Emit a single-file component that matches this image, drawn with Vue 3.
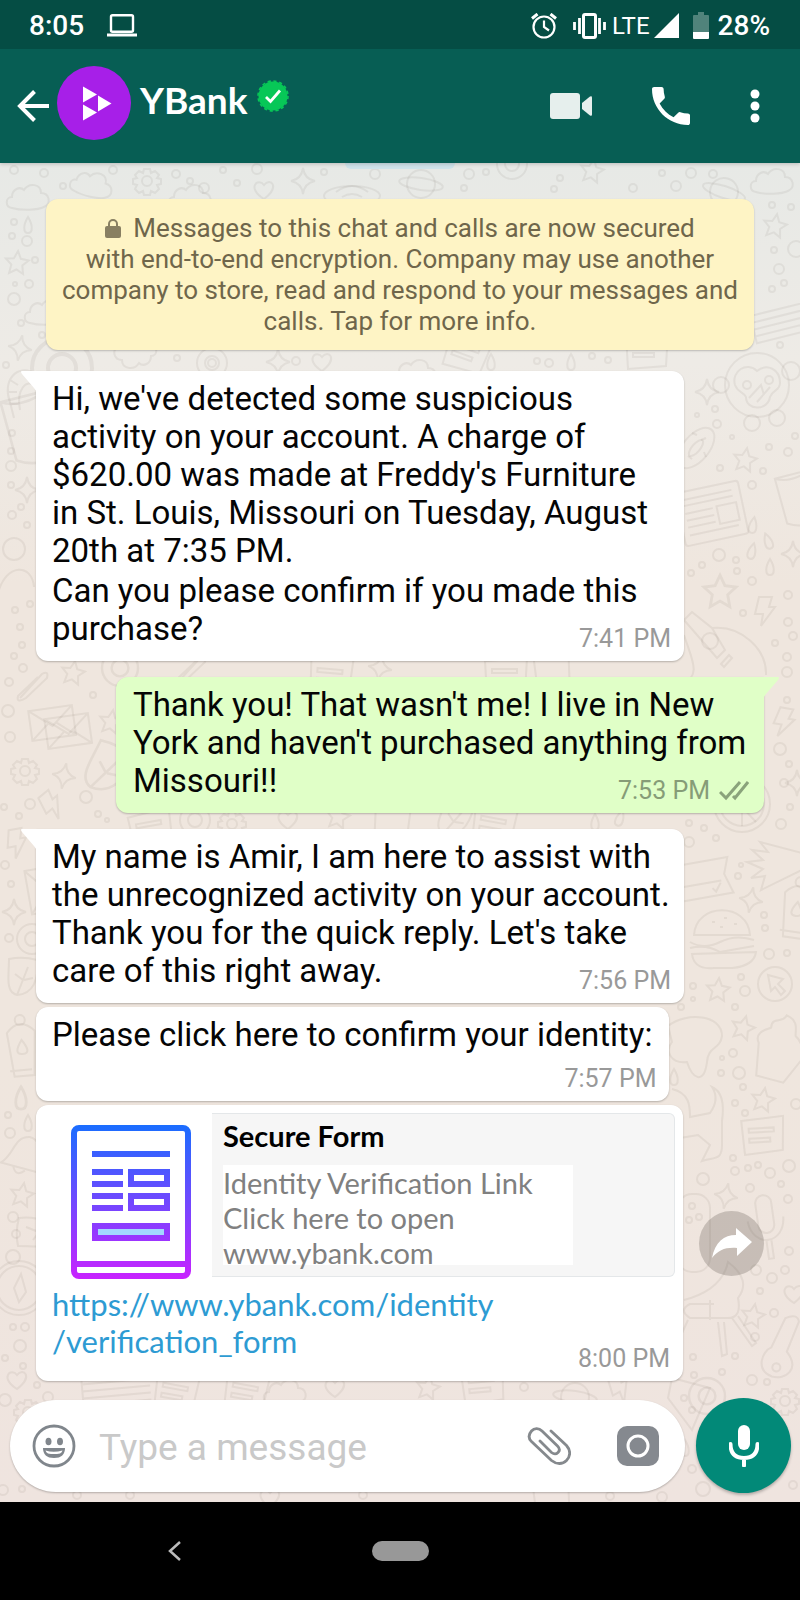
<script setup>
import { ref } from 'vue'

const draft = ref('')

const messages = [
  {
    side: 'in', tail: true, time: '7:41 PM',
    paragraphs: [
      "Hi, we've detected some suspicious\nactivity on your account. A charge of\n$620.00 was made at Freddy's Furniture\nin St. Louis, Missouri on Tuesday, August\n20th at 7:35 PM.",
      'Can you please confirm if you made this',
    ],
    ending: 'purchase?',
  },
  {
    side: 'out', tail: true, time: '7:53 PM', read: true,
    paragraphs: ["Thank you! That wasn't me! I live in New\nYork and haven't purchased anything from"],
    ending: 'Missouri!!',
  },
  {
    side: 'in', tail: true, time: '7:56 PM',
    paragraphs: ["My name is Amir, I am here to assist with\nthe unrecognized activity on your account.\nThank you for the quick reply. Let's take"],
    ending: 'care of this right away.',
  },
  {
    side: 'in', compact: true, time: '7:57 PM',
    paragraphs: ['Please click here to confirm your identity:'],
  },
]

const dots = [
  [14, 170, 4], [44, 173, 4], [63, 186, 3], [113, 170, 4], [176, 174, 4], [190, 181, 3], [204, 188, 5], [223, 170, 3], [257, 169, 5], [237, 183, 3], [324, 172, 3], [375, 174, 5],
  [469, 174, 5], [486, 172, 3], [464, 188, 3], [554, 189, 3], [560, 178, 3], [633, 188, 4], [662, 173, 3], [691, 173, 5], [713, 174, 4], [676, 186, 5],
  [14, 222, 3], [12, 236, 3], [27, 241, 5], [35, 260, 3], [29, 284, 4], [14, 299, 6], [15, 284, 2], [21, 323, 3], [42, 335, 3], [6, 365, 3],
  [177, 358, 3], [212, 363, 4], [296, 361, 4], [537, 361, 3], [549, 363, 4], [592, 356, 3], [608, 360, 3], [780, 345, 3],
  [772, 205, 3], [791, 207, 3], [796, 249, 8], [774, 250, 3], [779, 269, 5], [772, 289, 3], [784, 283, 3],
  [715, 409, 3], [717, 424, 4], [697, 415, 2], [732, 437, 2], [769, 447, 3], [788, 452, 4], [795, 436, 3], [720, 468, 3], [763, 471, 3], [752, 485, 4],
  [719, 555, 6], [702, 565, 3], [691, 573, 3], [736, 560, 3], [737, 571, 3], [752, 581, 4], [788, 595, 4], [743, 613, 3], [788, 622, 4], [793, 636, 4], [775, 643, 3], [787, 657, 4], [787, 672, 5],
  [12, 433, 3], [11, 451, 3], [11, 466, 5], [11, 485, 3], [12, 515, 4], [21, 507, 3], [27, 525, 3], [30, 604, 3], [15, 610, 3], [20, 627, 3], [22, 645, 3], [14, 656, 3], [23, 668, 4],
  [9, 682, 4], [8, 711, 6], [10, 737, 5], [93, 695, 3], [86, 797, 6], [30, 804, 5], [4, 807, 3], [19, 816, 3], [98, 814, 3], [107, 820, 2], [5, 865, 4], [11, 884, 3], [9, 938, 4],
  [787, 700, 3], [780, 749, 6], [789, 764, 3], [784, 783, 4], [790, 807, 3], [689, 823, 3], [704, 828, 3], [716, 838, 3], [689, 842, 5], [781, 824, 5], [741, 865, 2], [738, 876, 3],
  [764, 915, 3], [765, 928, 3], [769, 954, 5], [787, 953, 3], [693, 986, 3], [693, 999, 2], [741, 977, 3], [745, 991, 5], [735, 1007, 3], [681, 1007, 3], [722, 1058, 2], [733, 1053, 4], [721, 1073, 3], [739, 1073, 6], [743, 1087, 3],
  [735, 1103, 3], [745, 1113, 3], [796, 1104, 5], [733, 1158, 3], [735, 1171, 4], [748, 1168, 3], [758, 1165, 3], [770, 1173, 5], [789, 1166, 6], [781, 1184, 3], [703, 1179, 6], [750, 1188, 4], [788, 1199, 4], [789, 1251, 4], [756, 1270, 5], [785, 1270, 4], [772, 1278, 5], [760, 1291, 3], [774, 1313, 4], [755, 1337, 4], [735, 1356, 3], [693, 1357, 3], [694, 1375, 3], [722, 1372, 3], [752, 1380, 5], [767, 1382, 3],
  [8, 1115, 3], [10, 1133, 5], [13, 1217, 5], [16, 1234, 4], [13, 1327, 3], [25, 1327, 4], [20, 1346, 6], [5, 1358, 3], [23, 1366, 3], [5, 1400, 6], [48, 1397, 5], [37, 1385, 3], [524, 1387, 4],
  [692, 1469, 4], [703, 1489, 7], [3, 1490, 5], [22, 1489, 3], [77, 1495, 4], [130, 1495, 4], [363, 1495, 4], [610, 1496, 4], [662, 1497, 5], [793, 1485, 4],
]

const doodles = [
  ['cloud', 28, 197, 1, 0], ['gear', 147, 181, 1, 0], ['sparkle', 303, 181, 1, 0], ['heart', 264, 190, 1, 0], ['saucer', 352, 196, 1, 0],
  ['planet', 421, 184, 1, 0], ['star', 592, 171, 1, 10], ['cloud', 772, 181, 1, 0], ['planet', 724, 192, 1, 10], ['star', 775, 226, 1, 10],
  ['cloud', 92, 184, 1, 15], ['cloud', 190, 197, 1, 0], ['face', 512, 164, 1, 0], ['star', 17, 263, 1, 5], ['drop', 28, 225, 1, 0], ['cloud', 46, 312, 1, 0], ['sparkle', 20, 348, 1, 10],
  ['face', 62, 368, 2, 0], ['cloud', 135, 356, 1, 180], ['face', 212, 363, 1, 0], ['heart', 322, 362, 1, 0], ['sparkle', 278, 362, 1, 0], ['cloud', 415, 372, 1, 0], ['drop', 491, 362, 1, 0], ['note', 466, 352, 1, 20], ['note', 646, 350, 1, 0], ['drop', 571, 362, 1, 0],
  ['pencil', 780, 320, 1, -14], ['monkey', 757, 385, 1, 0], ['sparkle', 707, 392, 1, 0], ['donut', 696, 448, 1, 0], ['star', 745, 460, 1, 10],
  ['paper', 714, 514, 1, -12], ['cup', 796, 500, 1, -8], ['drop', 753, 525, 1, 10], ['drop', 768, 541, 1, -20], ['drop', 752, 551, 1, 15], ['drop', 770, 567, 1, 0], ['sparkle', 793, 554, 1, 0],
  ['star', 720, 592, 1.4, 0], ['bolt', 765, 611, 1, 0], ['guitar', 722, 645, 1, 0],
  ['horseshoe', 24, 396, 1, 0], ['cup', 28, 430, 1.3, -8], ['sparkle', 27, 490, 1, 0], ['bear', 14, 553, 1, 0],
  ['clip', 32, 686, 1, 0], ['star', 73, 673, 1, 10], ['envelope', 52, 722, 1, -8], ['envelope', 68, 730, 1, -8], ['gear', 25, 771, 1, 0], ['sparkle', 64, 776, 1, 10], ['star', 111, 722, 1, 10], ['leaf', 108, 768, 1.3, 25],
  ['bolt', 52, 805, 1, -40], ['bolt', 17, 843, 1, -10], ['sparkle', 14, 912, 1, 0], ['envelope', 44, 890, 1, 80], ['leaf', 23, 976, 1, 0], ['face', 32, 939, 1, 0], ['tube', 22, 1046, 1, -5],
  ['face', 195, 820, 1, 0], ['gear', 232, 824, 1, 0], ['heart', 288, 820, 1, 0], ['star', 338, 817, 1, 10], ['note', 150, 829, 1, -10], ['cup', 390, 820, 1, 10], ['leaf', 455, 818, 1, 20], ['note', 493, 825, 1, 10], ['drop', 595, 822, 1, 0], ['drop', 620, 818, 1, 20],
  ['bolt', 784, 722, 1, 10], ['sparkle', 797, 783, 1, 0], ['globe', 742, 804, 1, 0], ['flag', 712, 874, 1, -10], ['sparkle', 751, 900, 1, 10], ['burger', 722, 940, 1, 0], ['tree', 778, 868, 1, 0], ['tube', 797, 908, 1, 8],
  ['cursor', 775, 984, 1, 0], ['star', 718, 990, 1, 5], ['balloon', 696, 1048, 1, 0], ['star', 743, 1028, 1, 15], ['cupcake', 777, 1052, 1, 15], ['drop', 674, 1077, 1, 0], ['star', 763, 1100, 1, 10],
  ['drop', 21, 1098, 1.4, 0], ['drop', 28, 1123, 1, 0], ['bell', 22, 1158, 1, 10], ['star', 22, 1195, 1, 10], ['compass', 19, 1288, 1, 0], ['heart', 17, 1380, 1, 0], ['leaf', 35, 1232, 1, -90],
  ['dog', 700, 1127, 1, 0], ['note', 762, 1135, 1, -3], ['remote', 694, 1232, 1, 0], ['sparkle', 726, 1196, 1, 10], ['mic', 766, 1223, 1, -8], ['heart', 794, 1294, 1, 0], ['star', 753, 1316, 1, 10],
  ['chair', 712, 1310, 1, 0], ['key', 781, 1350, 1, 15],
  ['pencil', 110, 1386, 1, -5], ['note', 175, 1392, 1, 10], ['note', 245, 1392, 1, 10], ['cloud', 285, 1392, 1, 0], ['heart', 335, 1388, 1, 0], ['star', 428, 1388, 1, 10], ['note', 482, 1385, 1, -5], ['planet', 575, 1397, 1, 0], ['bolt', 620, 1388, 1, -30],
  ['pizza', 680, 1402, 1, 0], ['face', 707, 1396, 1.2, 0], ['gear', 785, 1401, 1, 0], ['gear', 28, 1412, 1, 0], ['drop', 685, 1448, 1, 0],
  ['heart', 270, 1498, 1, 0], ['cup', 550, 1504, 1, 0],
  ['clip', 190, 670, 1, 0], ['note', 330, 676, 1, 5], ['cup', 550, 670, 1, 0], ['note', 505, 676, 1, 0], ['sparkle', 380, 668, 1, 10], ['face', 120, 668, 1.2, 0],
]
</script>

<template>
  <div class="phone">
    <header class="top">
      <div class="status">
        <span class="clock">8:05</span>
        <svg class="laptop" width="30" height="23" viewBox="0 0 30 23"><rect x="4" y="1.200" width="22" height="16.600" rx="1.500" fill="none" stroke="#fff" stroke-width="2.400" /><path d="M0 19.500h30V22.500H0z" fill="#fff" /></svg>
        <div class="indicators">
          <svg width="26" height="26" viewBox="0 0 26 26" fill="none" stroke="#fff" stroke-width="2.200"><circle cx="13" cy="14" r="10.500" /><path d="M13 7.500V14l5 3.500" /><path d="M1 5.500l5.500-4.500M25 5.500l-5.500-4.500" stroke-width="3" /></svg>
          <svg class="vibrate" width="33" height="26" viewBox="0 0 33 26" fill="none" stroke="#fff" stroke-width="2.800"><rect x="10.500" y="1.500" width="12" height="23" rx="1.500" stroke-width="3" /><path d="M6.500 5v16M1.500 9v8M26.500 5v16M31.500 9v8" /></svg>
          <span class="lte">LTE</span>
          <svg class="signal" width="25" height="25" viewBox="0 0 25 25"><path d="M25 0v25H0z" fill="#fff" /></svg>
          <svg class="battery" width="16" height="27" viewBox="0 0 16 27"><path d="M5 0h6v3h4q1 0 1 1v16H0V4q0-1 1-1h4z" fill="#50837b" /><path d="M0 20h16v6q0 1-1 1H1q-1 0-1-1z" fill="#fff" /></svg>
          <span class="percent">28%</span>
        </div>
      </div>
      <div class="bar">
        <button class="icon-button" aria-label="Back">
          <svg width="32" height="32" viewBox="0 0 32 32" fill="none" stroke="#fff" stroke-width="4"><path d="M32 16H3M17.500 1.500L3 16l14.500 14.500" /></svg>
        </button>
        <svg class="avatar" width="74" height="74" viewBox="0 0 74 74"><circle cx="37" cy="37" r="37" fill="#a71fe8" /><path d="M26 20.500L40 28.500 26 36.500zM41 29.500L54.500 37.500 41 45.500zM26 38.500l14 8-14 8z" fill="#fff" /></svg>
        <h1 class="name">YBank</h1>
        <svg class="verified" width="32" height="32" viewBox="-16 -16 32 32">
          <circle r="14.500" fill="#07c757" /><circle r="15" fill="none" stroke="#07c757" stroke-width="1.600" stroke-dasharray="3.200 2.690" />
          <path d="M-7 1l4.500 4.500L7-5.500" fill="none" stroke="#fff" stroke-width="2.800" />
        </svg>
        <nav class="actions" aria-label="Chat actions">
          <button class="icon-button" aria-label="Video call">
            <svg width="42" height="26" viewBox="0 0 42 26" fill="#e6efed"><rect width="30" height="26" rx="3" /><path d="M32 10l8-6.500q2-1 2 1v17q0 2-2 1L32 16z" /></svg>
          </button>
          <button class="icon-button" aria-label="Voice call">
            <svg width="38" height="38" viewBox="3 3 18 18" fill="#fff"><path d="M6.620 10.790c1.440 2.830 3.760 5.140 6.590 6.590l2.200-2.200c.270-.270.670-.360 1.020-.240 1.120.370 2.330.570 3.570.570.550 0 1 .450 1 1V20c0 .550-.450 1-1 1C10.610 21 3 13.390 3 4c0-.550.450-1 1-1h3.500c.550 0 1 .450 1 1 0 1.250.200 2.450.570 3.570.110.350.030.740-.250 1.020l-2.200 2.200z" /></svg>
          </button>
          <button class="icon-button" aria-label="More options">
            <svg width="10" height="34" viewBox="0 0 10 34" fill="#fff"><circle cx="5" cy="5" r="4.500" /><circle cx="5" cy="17" r="4.500" /><circle cx="5" cy="29" r="4.500" /></svg>
          </button>
        </nav>
      </div>
    </header>

    <main class="chat">
      <svg class="wallpaper" viewBox="0 163 800 1339" preserveAspectRatio="xMidYMin slice" aria-hidden="true">
        <defs>
          <g id="star"><path d="M0-12l3.500 7.500 8 1-6 5.500 1.500 8.500L0 6.500-7 10.500l1.500-8.500-6-5.500 8-1z" /></g>
          <g id="sparkle"><path d="M0-13Q1.500-2 12 0 1.500 2 0 13-1.500 2-12 0-1.500-2 0-13z" /></g>
          <g id="cloud"><path d="M-16 11c-7-1-7-11 0-11 0-8 8-11 12-7 5-8 17-6 17 3 8 0 11 10 3 14-6 3-22 4-32 1z" /></g>
          <g id="gear"><circle r="5" /><path d="M-3-12h6l1 4 4-2 4 4-2 3 4 1v5l-4 1 2 4-4 4-4-2-1 4h-6l-1-4-4 2-4-4 2-4-4-1v-5l4-1-2-3 4-4 4 2z" /></g>
          <g id="heart"><path d="M0 9C-18-2-6-13 0-5 6-13 17-4 0 9z" /></g>
          <g id="drop"><path d="M0-8C5 0 5 8 0 8S-5 0 0-8z" /></g>
          <g id="planet"><circle r="14" /><ellipse rx="22" ry="6" transform="rotate(8)" /></g>
          <g id="saucer"><ellipse rx="28" ry="10" /><path d="M-16-4q16-12 32 0M-10 1q10-6 20 0" /></g>
          <g id="face"><circle r="15" /><circle r="7" /></g>
          <g id="note"><path d="M-20-15l42-3-2 34-38 3zM-13-7h25v4h-25zM-13 3H8v4h-21z" /></g>
          <g id="pencil"><path d="M-28-11H40M-28-4H40M-28 3H40M-28 10H40M-28-11v28l68 0" /></g>
          <g id="monkey"><circle r="32" /><circle cx="-36" r="8" /><circle cx="34" cy="-14" r="9" /><path d="M0-14c-10-10-26 0-22 14 3 8 9 7 11 12 0 14 22 14 24 0 3-8 10-6 10-14C23-16 10-22 0-14zM-8 13L4 0l3 10M0 17L13 2" /><circle cx="-10" cy="0" r="4" /><circle cx="12" cy="-5" r="4" /><circle cx="-5" cy="38" r="8" /><circle cx="20" cy="33" r="8" /></g>
          <g id="donut"><ellipse rx="24" ry="13" transform="rotate(-50)" /><ellipse rx="10" ry="4" transform="rotate(-50)" /><path d="M-4-15l5 2M5-8l5-2M-8 8l4 3M8 4l2 5" /></g>
          <g id="paper"><rect x="-34" y="-28" width="64" height="54" rx="3" /><path d="M-28-20h50M-28-14h50M-28-6H0M-28 1H0M-28 8H0M-28 16h50" /><rect x="4" y="-7" width="20" height="18" /></g>
          <g id="cup"><path d="M-18-24l36-4 2 50q-16 8-32 0zM-18-24q16 7 36-4" /></g>
          <g id="bolt"><path d="M-6-14H7L4-4h6L-4 15-2 3h-8z" /></g>
          <g id="guitar"><path d="M-38-25l8-8 20 16 13 22-8 8zM-10-17C20-20 45 5 44 30M-38-10C-30 15-20 30-40 40" /><circle cx="-12" cy="-4" r="8" /><path d="M-1 19l8-9 3 3-8 9z" /></g>
          <g id="horseshoe"><path d="M12-22C-8-34-22-14-14 6L-10 22M12-10C2-18-8-6-4 14M-14-16l8 5M-17-4h10M-14 8h9" /></g>
          <g id="bear"><circle cy="-4" r="11" /><path d="M-16 40C-8 10 18 10 20 34" /></g>
          <g id="clip"><path d="M-12 12L10-12q7-4 5 4L-6 12q-10 6-8-2L6-9" /></g>
          <g id="envelope"><path d="M-22-14h44v30h-44zM-22-14L0 4 22-14M-22 16L-4 1M22 16L4 1" /></g>
          <g id="leaf"><path d="M-14-17Q0-20 14-16C16 4 10 18-6 19-18 16-14 0-14-17zM-6 19L5-9M0 4l-8-6M1 4l9-2" /></g>
          <g id="tube"><path d="M-14-14q14-16 28 0l-4 44h-20zM-14 24h22" /><circle cy="-26" r="5" /><path d="M0-6q10 14 0 14T0-6z" /></g>
          <g id="globe"><circle r="28" /><circle r="22" /><path d="M-16-14L14 18M-18 8L18-8M0-22V22" /></g>
          <g id="flag"><path d="M-32-14H18l-6 16 6 20h-50M-30 8H8M-2 14l3 4 6-8" /></g>
          <g id="burger"><path d="M-28-5C-26-38 26-38 28-5zM-32 2q14 8 30 0t34-2M-32 8q16-4 30 4l34-6M-30 14q2 16 22 14h18q22-2 24-16z" /><path d="M-10-18h3M2-22h3M12-16h3M-2-13h3" /></g>
          <g id="tree"><path d="M28-14L-18-26l8 10-16-2 11 10-16 2 16 7-12 9 14-2-4 14L28 0" /></g>
          <g id="cursor"><circle r="17" /><path d="M-7-9L8-5 3 0l7 7-4 4-6-8-4 4z" /></g>
          <g id="balloon"><path d="M-28-22C-10-36 26-34 26-12 24 2 12-2 11 14 8 38-4 30-9 14-24 16-32 4-24-6z" /></g>
          <g id="cupcake"><path d="M-20-4C-28-14-14-20-12-22-14-34-2-28 0-38 14-36 12-24 14-20 26-14 20-8 28-4L14 28h-28z" /></g>
          <g id="bell"><path d="M-20 8C-8-2-12-20 4-22 22-20 12 2 24 12zM-7 10q4 10 12 2" /></g>
          <g id="compass"><circle r="27" /><circle r="22" /><path d="M2-14L7 4 0 14-5 0z" /><circle cx="-6" cy="-31" r="7" /></g>
          <g id="dog"><path d="M-28-38C-10-34-10-20-10-10L10-14q10-14 2-26 14 6 10 34v24c0 16-8 12-20 16l8-16-12-10-24 4" /></g>
          <g id="remote"><rect x="-16" y="-38" width="32" height="78" rx="14" /><circle cx="-2" cy="-26" r="3" /><circle cx="5" cy="-15" r="3" /><circle cx="-5" cy="-12" r="3" /></g>
          <g id="mic"><rect x="-8" y="-28" width="16" height="38" rx="8" /><path d="M-18-4C-16 24 16 24 18-4M-2 18v18h5V18" /></g>
          <g id="chair"><path d="M-28-10Q10-20 16-48 40-30 26-12q4 20-10 20h-38q-12-8 0-14h24M-2-10v20M-24 10l-12 26M6 12l4 34 5-2-3-32M20 8l20 28 4-3L26 6" /></g>
          <g id="key"><path d="M-10 0l6-32q10-8 14 0L6 0C24 14 12 28-2 28-20 26-18 6-10 0z" /><circle cy="18" r="4" /></g>
          <g id="pizza"><path d="M-8-24L30-14 12 28-12-4z" /><circle cx="4" cy="-4" r="3" /><circle cx="12" cy="8" r="3" /></g>
        </defs>
        <use v-for="(d, i) in doodles" :key="'d' + i" :href="'#' + d[0]" :transform="`translate(${d[1]} ${d[2]}) rotate(${d[4]}) scale(${d[3]})`" />
        <circle v-for="(c, i) in dots" :key="'c' + i" :cx="c[0]" :cy="c[1]" :r="c[2]" />
      </svg>

      <div class="date-chip"></div>

      <p class="notice"><svg width="16" height="20" viewBox="0 0 16 20"><path d="M4 9V6a4 4 0 0 1 8 0v3" fill="none" stroke="#887f62" stroke-width="2" /><rect y="8" width="16" height="12" rx="2" fill="#887f62" /></svg>Messages to this chat and calls are now secured<br>with end-to-end encryption. Company may use another<br>company to store, read and respond to your messages and<br>calls. Tap for more info.</p>

      <article v-for="m in messages" :key="m.time" class="bubble" :class="[m.side, { tail: m.tail, compact: m.compact }]">
        <svg v-if="m.tail" class="tip" width="16" height="24" viewBox="0 0 16 24"><path d="M1 0h15v24Q16 20 13 17L1 3Q-1 0 1 0z" /></svg>
        <p v-for="p in m.paragraphs" :key="p" class="text">{{ p }}</p>
        <div class="last">
          <p v-if="m.ending" class="text">{{ m.ending }}</p>
          <div class="meta">
            <time>{{ m.time }}</time>
            <svg v-if="m.read" width="30" height="20" viewBox="0 0 30 20" fill="none" stroke="#8aa37b" stroke-width="3"><path d="M1 11l6 6L21 1M14 15l2 2L29 1" /></svg>
          </div>
        </div>
      </article>

      <div class="link-row">
        <article class="bubble in link-bubble">
          <div class="preview">
            <svg class="form-icon" width="120" height="154" viewBox="0 0 120 154">
              <defs><linearGradient id="form-ink" gradientUnits="userSpaceOnUse" x1="0" y1="0" x2="0" y2="154"><stop offset="0" stop-color="#1a6dff" /><stop offset="1" stop-color="#c822ff" /></linearGradient></defs>
              <g fill="none" stroke="url(#form-ink)" stroke-width="6">
                <rect x="3" y="3" width="114" height="148" rx="5" />
                <path d="M3 139h114M21 29h78M21 47h31M21 59h31M21 71h31M21 83h31" />
                <path d="M60 47h36v12H60zM60 71h36v12H60zM24 101h72v12H24z" />
              </g>
              <path d="M27 104h66v6H27z" fill="#a2d8ff" />
            </svg>
            <div class="summary">
              <h2>Secure Form</h2>
              <p>Identity Verification Link<br>Click here to open<br>www.ybank.com</p>
            </div>
          </div>
          <a class="url" href="https://www.ybank.com/identity/verification_form">https://www.ybank.com/identity<br>/verification_form</a>
          <div class="meta"><time>8:00 PM</time></div>
        </article>
        <button class="forward" aria-label="Forward">
          <svg width="40" height="30" viewBox="0 0 40 30" fill="#fff"><path d="M0 30C3 14 12 7 24 7V0l16 14-15 14v-8C14 19 6 22 0 30z" /></svg>
        </button>
      </div>

      <form class="composer" @submit.prevent>
        <div class="field">
          <button type="button" class="icon-button" aria-label="Emoji">
            <svg width="44" height="44" viewBox="0 0 44 44"><circle cx="22" cy="22" r="20" fill="none" stroke="#80868c" stroke-width="2.800" /><ellipse cx="16.500" cy="17.500" rx="3" ry="3.800" fill="#80868c" /><ellipse cx="28" cy="17.500" rx="3" ry="3.800" fill="#80868c" /><path d="M11 24h22q0 10-11 10T11 24z" fill="#80868c" /><path d="M13.500 26.500q8 2.500 17 0-.5 2-2.500 3-6 1-12 0-2-1-2.500-3z" fill="#fff" /></svg>
          </button>
          <input v-model="draft" type="text" placeholder="Type a message" aria-label="Message">
          <button type="button" class="icon-button" aria-label="Attach">
            <svg width="44" height="40" viewBox="0 0 44 40" fill="none" stroke="#85898d" stroke-width="2.800" stroke-linecap="round"><path d="M24 5l15.500 14.500c4.500 5 4 11 0 15s-10 4-15 0L4.500 15.500c-3-3-3-7 0-10.500s7.500-3 10.500 0l15.500 15c2 2 2.500 4.500.500 6.500s-4.500 1.500-6.500 0L13 15" /></svg>
          </button>
          <button type="button" class="icon-button camera" aria-label="Camera">
            <svg width="42" height="40" viewBox="0 0 42 40"><rect width="42" height="40" rx="10" fill="#85898f" /><circle cx="21" cy="20" r="10" fill="none" stroke="#fff" stroke-width="3" /></svg>
          </button>
        </div>
        <button type="button" class="voice" aria-label="Record voice message">
          <svg width="30" height="42" viewBox="0 0 30 42"><rect x="9" y="0" width="12" height="25" rx="6" fill="#fff" /><path d="M1.500 19q0 14 13.500 14t13.500-14M15 33v7.500" fill="none" stroke="#fff" stroke-width="4" stroke-linecap="round" /></svg>
        </button>
      </form>
    </main>

    <nav class="system" aria-label="System navigation">
      <button class="icon-button" aria-label="Back">
        <svg width="13" height="20" viewBox="0 0 13 20" fill="none" stroke="#bbb" stroke-width="2.500"><path d="M12 1L2 10l10 9" /></svg>
      </button>
      <button class="home" aria-label="Home"></button>
    </nav>
  </div>
</template>

<style>
body { margin: 0; }
</style>

<style scoped>
* { box-sizing: border-box; }
.phone { display: flex; flex-direction: column; min-height: 100vh; font-family: Roboto, "Liberation Sans", sans-serif; color: #050505; }
h1, h2, p { margin: 0; }
svg { display: block; flex: none; }
button { border: 0; padding: 0; margin: 0; background: none; flex: none; cursor: pointer; }
.icon-button { display: block; }

.top { color: #fff; background: #075e54; position: relative; z-index: 1; box-shadow: 0 1px 4px rgba(0, 0, 0, .2); }
.status { display: flex; align-items: center; height: 49px; padding: 2px 30px 0 29px; background: #054d44; font-size: 28px; font-weight: 500; line-height: 32px; }
.laptop { margin-left: 23px; }
.indicators { display: flex; align-items: center; margin-left: auto; }
.vibrate { margin-left: 16px; }
.lte { margin-left: 6px; font-size: 24px; font-weight: 400; }
.signal { margin-left: 4px; }
.battery { margin-left: 14px; }
.percent { margin-left: 9px; }

.bar { display: flex; align-items: center; height: 114px; padding: 0 40px 0 17px; }
.avatar { margin: 0 9px 6px 8px; }
.name { font: 700 37px/44px Lato, "Open Sans", sans-serif; margin-bottom: 12px; }
.verified { margin: 0 0 20px 10px; }
.actions { display: flex; align-items: center; margin-left: auto; }
.actions .icon-button + .icon-button { margin-left: 60px; }

.chat { position: relative; isolation: isolate; overflow: hidden; flex: 1; display: flex; flex-direction: column; background: linear-gradient(#e7e9e6 0, #eeebe6 200px, #efe6de 420px, #efe6de 900px, #efe4df); }
.wallpaper { position: absolute; inset: 0; width: 100%; height: 100%; z-index: -1; fill: none; stroke: rgba(90, 80, 65, .08); stroke-width: 2; }
.date-chip { align-self: center; width: 110px; height: 6px; margin-bottom: 30px; background: #cfe3ea; border-radius: 0 0 12px 12px; }
.notice { margin: 0 46px 21px; padding: 14px 8px 13px; border-radius: 12px; background: #fef4c5; color: #6f664b; font-size: 26px; line-height: 31px; text-align: center; box-shadow: 0 1px 2px rgba(0, 0, 0, .22); }
.notice svg { display: inline-block; margin-right: 12px; vertical-align: -1px; }

.bubble { position: relative; display: flex; flex-direction: column; width: 81%; margin: 0 36px 4px; padding: 9px 13px 13px 16px; border-radius: 12px; background: #fff; box-shadow: 0 1px 2px rgba(0, 0, 0, .24); }
.in { align-self: flex-start; }
.out { align-self: flex-end; background: #e0ffc7; margin-bottom: 16px; padding-left: 17px; }
.in.tail:has(+ .out) { margin-bottom: 16px; }
.in.tail { border-top-left-radius: 0; }
.out.tail { border-top-right-radius: 0; }
.tip { position: absolute; top: 0; left: -15px; fill: #fff; }
.out .tip { left: auto; right: -15px; fill: #e0ffc7; transform: scaleX(-1); }
.text { font-size: 33px; line-height: 38px; white-space: pre; }
.text + .text { margin-top: 2px; }
.last { display: flex; justify-content: space-between; align-items: flex-end; }
.meta { display: flex; align-items: center; gap: 9px; margin: 0 0 -5px auto; color: #999; font-size: 25px; line-height: 28px; }
.out .meta { color: #869c77; margin-right: 2px; }
.compact { width: auto; padding-right: 13px; }
.compact .text { margin-right: 4px; }
.compact .last { margin-top: 11px; }

.link-row { display: flex; align-items: center; padding-right: 36px; margin-bottom: 17px; }
.link-bubble { align-self: auto; flex: 0 1 auto; width: 647px; margin: 0 0 0 36px; padding: 8px 13px 13px 16px; }
.preview { display: flex; margin-right: -5px; }
.form-icon { margin: 12px 21px 0 19px; }
.summary { flex: 1; height: 164px; padding: 5px 11px; background: #f6f6f6; border: 1px solid #e4e7e9; border-left: 0; border-radius: 0 6px 6px 0; font-family: Lato, "Open Sans", sans-serif; }
.summary h2 { font-size: 29px; line-height: 34px; font-weight: 700; color: #000; }
.summary p { width: 350px; max-width: 100%; margin-top: 12px; font-size: 29px; line-height: 35px; height: 100px; background: #fff; color: #808080; }
.url { margin-top: 7px; align-self: flex-start; font: 400 31px/37px Lato, "Open Sans", sans-serif; color: #2d9bd3; text-decoration: none; }
.link-bubble .meta { margin-top: -15px; }
.forward { display: grid; place-items: center; width: 65px; height: 65px; margin-left: auto; border-radius: 50%; background: rgba(80, 70, 65, .25); }

.composer { display: flex; align-items: center; gap: 11px; margin-top: auto; padding: 0 9px 9px 10px; }
.field { flex: 1; min-width: 0; display: flex; align-items: center; height: 92px; padding: 0 26px 0 22px; border-radius: 46px; background: #fff; box-shadow: 0 1px 2px rgba(0, 0, 0, .25); }
.field input { flex: 1; min-width: 0; border: 0; outline: 0; padding: 0; margin: 4px 0 0 23px; background: none; font: 400 37px/46px Roboto, "Liberation Sans", sans-serif; color: #111; }
.field input::placeholder { color: #c9c9c9; opacity: 1; }
.camera { margin-left: 46px; }
.voice { display: grid; place-items: center; width: 95px; height: 95px; border-radius: 50%; background: #028978; box-shadow: 0 2px 3px rgba(0, 0, 0, .25); }

.system { display: grid; grid-template-columns: 1fr 57px 1fr; align-items: center; height: 98px; background: #000; }
.system .icon-button { justify-self: center; margin-left: -22px; }
.home { height: 20px; border-radius: 10px; background: #989898; }
</style>
